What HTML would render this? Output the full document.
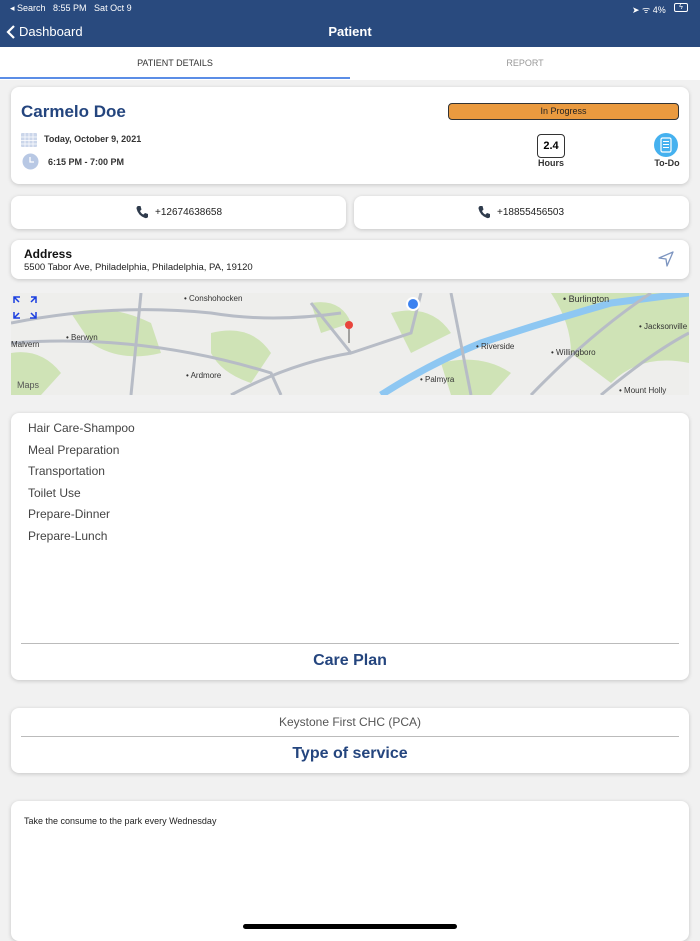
<!DOCTYPE html>
<html><head><meta charset="utf-8"><style>
*{margin:0;padding:0;box-sizing:border-box}
body{width:700px;height:934px;overflow:hidden;background:#f1f1f1;font-family:"Liberation Sans",sans-serif;position:relative}
.a{position:absolute}
.card{position:absolute;background:#fff;border-radius:8px;box-shadow:0 1px 4px rgba(0,0,0,.18)}
.navy{color:#24457e}
</style></head><body>
<div class="a" style="left:0;top:0;width:700px;height:47px;background:#294a7e"></div>
<div class="a" style="left:10px;top:3px;font-size:9px;color:#fff">◂ Search&nbsp;&nbsp;&nbsp;8:55 PM&nbsp;&nbsp;&nbsp;Sat Oct 9</div>
<div class="a" style="left:632px;top:3px;font-size:9px;color:#fff">➤ ᯤ 4%</div>
<div class="a" style="left:674px;top:3px;width:14px;height:9px;border:1px solid #fff;border-radius:2px;font-size:7px;color:#fff;text-align:center;line-height:7px">ϟ</div>
<svg class="a" style="left:5px;top:24px" width="12" height="16"><path d="M9 2 L3 8 L9 14" stroke="#fff" stroke-width="2.2" fill="none"/></svg>
<div class="a" style="left:19px;top:24px;font-size:13px;color:#fff">Dashboard</div>
<div class="a" style="left:0;top:24px;width:700px;text-align:center;font-size:13px;font-weight:bold;color:#fff">Patient</div>
<div class="a" style="left:0;top:47px;width:700px;height:33px;background:#fff"></div>
<div class="a" style="left:0;top:58px;width:350px;text-align:center;font-size:9px;color:#333">PATIENT DETAILS</div>
<div class="a" style="left:350px;top:58px;width:350px;text-align:center;font-size:9px;color:#999">REPORT</div>
<div class="a" style="left:0;top:77px;width:350px;height:2px;background:#5b8de6"></div>

<div class="card" style="left:11px;top:87px;width:678px;height:97px"></div>
<div class="a navy" style="left:21px;top:102px;font-size:17px;font-weight:bold">Carmelo Doe</div>
<div class="a" style="left:448px;top:103px;width:231px;height:17px;background:#ea9a3f;border:1px solid #333;border-radius:4px;font-size:9px;text-align:center;line-height:15px;color:#222">In Progress</div>
<svg class="a" style="left:20px;top:130px" width="18" height="18"><rect x="1" y="3" width="16" height="14" fill="#cbd6ea" rx="1"/><g stroke="#fff" stroke-width=".7"><path d="M1 7H17M1 10.5H17M1 14H17M5 3V17M9 3V17M13 3V17"/></g></svg>
<div class="a" style="left:44px;top:134px;font-size:9px;font-weight:bold;color:#333">Today, October 9, 2021</div>
<svg class="a" style="left:22px;top:153px" width="17" height="17"><circle cx="8.5" cy="8.5" r="8" fill="#b8c8e4"/><path d="M8 4V9H12" stroke="#fff" stroke-width="1.3" fill="none"/></svg>
<div class="a" style="left:48px;top:157px;font-size:9px;font-weight:bold;color:#333">6:15 PM - 7:00 PM</div>
<div class="a" style="left:537px;top:134px;width:28px;height:24px;border:1px solid #333;border-radius:4px;font-size:11px;font-weight:bold;text-align:center;line-height:22px">2.4</div>
<div class="a" style="left:530px;top:158px;width:42px;text-align:center;font-size:9px;font-weight:bold;color:#333">Hours</div>
<svg class="a" style="left:654px;top:133px" width="24" height="24"><circle cx="12" cy="12" r="12" fill="#45b1ef"/><rect x="7" y="5" width="10" height="14" rx="1.5" fill="none" stroke="#fff" stroke-width="1.2"/><path d="M9 8.5H15M9 11.5H15M9 14.5H15" stroke="#fff" stroke-width="1"/></svg>
<div class="a" style="left:646px;top:158px;width:42px;text-align:center;font-size:9px;font-weight:bold;color:#333">To-Do</div>

<div class="card" style="left:11px;top:196px;width:335px;height:33px"></div>
<div class="card" style="left:354px;top:196px;width:335px;height:33px"></div>
<svg class="a" style="left:135px;top:205px" width="14" height="14"><path d="M3 1 L5.5 1 L6.5 4.5 L5 6 Q6.5 9 8.5 9.5 L10 8 L13 9 L13 12 Q12 13.5 10 13 Q3 10.5 1.5 3.5 Q1.5 1.5 3 1Z" fill="#2f3b4c"/></svg>
<div class="a" style="left:155px;top:207px;font-size:10px;color:#222">+12674638658</div>
<svg class="a" style="left:477px;top:205px" width="14" height="14"><path d="M3 1 L5.5 1 L6.5 4.5 L5 6 Q6.5 9 8.5 9.5 L10 8 L13 9 L13 12 Q12 13.5 10 13 Q3 10.5 1.5 3.5 Q1.5 1.5 3 1Z" fill="#2f3b4c"/></svg>
<div class="a" style="left:497px;top:207px;font-size:10px;color:#222">+18855456503</div>

<div class="card" style="left:11px;top:240px;width:678px;height:39px"></div>
<div class="a" style="left:24px;top:247px;font-size:12px;font-weight:bold;color:#111">Address</div>
<div class="a" style="left:24px;top:262px;font-size:9.5px;color:#222">5500 Tabor Ave, Philadelphia, Philadelphia, PA, 19120</div>
<svg class="a" style="left:658px;top:251px" width="16" height="16"><path d="M15 1 L1 7 L8 8 L9 15Z" fill="none" stroke="#7d95c0" stroke-width="1.3" stroke-linejoin="round"/></svg>

<svg class="a" style="left:11px;top:293px" width="678" height="102">
<rect width="678" height="102" fill="#eeeeec"/>
<g fill="#cfe3b6"><path d="M60 20 Q100 10 140 30 L150 60 Q110 70 80 50Z"/><path d="M200 40 Q240 30 260 60 L240 90 Q210 80 200 60Z"/><path d="M540 0 L678 0 L678 70 Q630 60 600 90 L560 60 Q560 30 540 0Z"/><path d="M0 60 Q30 55 50 80 L30 102 L0 102Z"/><path d="M300 10 Q330 5 340 30 L310 40Z"/><path d="M430 70 Q470 60 500 80 L480 102 L440 102Z"/><path d="M380 20 Q420 10 440 40 L400 60Z"/></g>
<path d="M370 102 Q420 70 470 50 Q530 30 600 10 L678 0" stroke="#8ec7f2" stroke-width="7" fill="none"/>
<g stroke="#b7bcc6" stroke-width="3" fill="none"><path d="M0 30 Q100 10 200 20 Q260 30 330 20"/><path d="M0 50 Q130 40 260 80 L270 102"/><path d="M130 0 L120 102"/><path d="M300 10 L340 60 L400 40 L410 0"/><path d="M220 102 Q280 70 340 60"/><path d="M520 102 Q580 40 640 0"/><path d="M440 0 L460 102"/><path d="M590 102 Q640 60 678 40"/></g>
<g font-family="Liberation Sans" font-size="8" fill="#333"><text x="173" y="8">• Conshohocken</text><text x="55" y="47">• Berwyn</text><text x="0" y="54">Malvern</text><text x="175" y="85">• Ardmore</text><text x="409" y="89">• Palmyra</text><text x="465" y="56">• Riverside</text><text x="540" y="62">• Willingboro</text><text x="552" y="9" font-size="9">• Burlington</text><text x="628" y="36">• Jacksonville</text><text x="608" y="100">• Mount Holly</text><text x="6" y="95" font-size="9" fill="#555"> Maps</text></g>
<circle cx="402" cy="11" r="6" fill="#3c82f0" stroke="#fff" stroke-width="2"/>
<circle cx="338" cy="32" r="4" fill="#e8453c"/><path d="M338 36V50" stroke="#555"/>
<g stroke="#1a3fe0" stroke-width="1.5" fill="none"><path d="M3 10V4H9M3 4L8 9M20 4H25V10M25 4L20 9M3 19V25H9M3 25L8 20M25 19V25H19M25 25L20 20"/></g>
</svg>

<div class="card" style="left:11px;top:413px;width:678px;height:267px"></div>
<div class="a" style="left:28px;top:418px;font-size:12px;color:#444;line-height:21.5px">Hair Care-Shampoo<br>Meal Preparation<br>Transportation<br>Toilet Use<br>Prepare-Dinner<br>Prepare-Lunch</div>
<div class="a" style="left:21px;top:643px;width:658px;height:1px;background:#bbb"></div>
<div class="a navy" style="left:0;top:652px;width:700px;text-align:center;font-size:16px;font-weight:bold">Care Plan</div>

<div class="card" style="left:11px;top:708px;width:678px;height:65px"></div>
<div class="a" style="left:0;top:715px;width:700px;text-align:center;font-size:12px;color:#555">Keystone First CHC (PCA)</div>
<div class="a" style="left:21px;top:736px;width:658px;height:1px;background:#bbb"></div>
<div class="a navy" style="left:0;top:745px;width:700px;text-align:center;font-size:16px;font-weight:bold">Type of service</div>

<div class="card" style="left:11px;top:801px;width:678px;height:140px"></div>
<div class="a" style="left:24px;top:816px;font-size:9px;color:#222">Take the consume to the park every Wednesday</div>
<div class="a" style="left:243px;top:924px;width:214px;height:5px;border-radius:3px;background:#000"></div>
</body></html>
